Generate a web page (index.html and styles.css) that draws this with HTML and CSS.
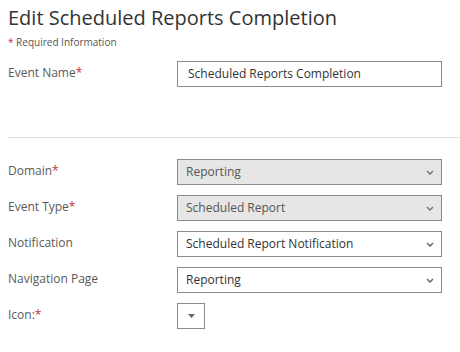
FILE: index.html
```html
<!DOCTYPE html>
<html>
<head>
  <title>Edit Scheduled Reports Completion</title>
  <link rel="stylesheet" href="styles.css">
</head>
<body>
  <h1 class="page-title">Edit Scheduled Reports Completion</h1>
  <p class="required-note"><span class="req">*</span> Required Information</p>

  <!-- Event name -->
  <div class="form-row first">
    <label class="field-label">Event Name<span class="req">*</span></label>
    <div class="text-input">Scheduled Reports Completion</div>
  </div>

  <hr class="divider">

  <!-- Event settings -->
  <div class="form-row">
    <label class="field-label">Domain<span class="req">*</span></label>
    <div class="select disabled">
      <span>Reporting</span>
      <svg class="chevron" width="8" height="5" viewBox="0 0 8 5"><path d="M1 1l3 3 3-3" fill="none" stroke="#777" stroke-width="1.5"/></svg>
    </div>
  </div>
  <div class="form-row">
    <label class="field-label">Event Type<span class="req">*</span></label>
    <div class="select disabled">
      <span>Scheduled Report</span>
      <svg class="chevron" width="8" height="5" viewBox="0 0 8 5"><path d="M1 1l3 3 3-3" fill="none" stroke="#777" stroke-width="1.5"/></svg>
    </div>
  </div>
  <div class="form-row">
    <label class="field-label">Notification</label>
    <div class="select">
      <span>Scheduled Report Notification</span>
      <svg class="chevron" width="8" height="5" viewBox="0 0 8 5"><path d="M1 1l3 3 3-3" fill="none" stroke="#666" stroke-width="1.5"/></svg>
    </div>
  </div>
  <div class="form-row">
    <label class="field-label">Navigation Page</label>
    <div class="select">
      <span>Reporting</span>
      <svg class="chevron" width="8" height="5" viewBox="0 0 8 5"><path d="M1 1l3 3 3-3" fill="none" stroke="#666" stroke-width="1.5"/></svg>
    </div>
  </div>
  <div class="form-row">
    <label class="field-label">Icon:<span class="req">*</span></label>
    <div class="icon-picker">
      <svg width="7" height="4" viewBox="0 0 7 4"><path d="M0 0h7L3.5 4z" fill="#666"/></svg>
    </div>
  </div>
</body>
</html>
```

FILE: styles.css
```css
body {
  margin: 0;
  padding: 0 0 0 8px;
  font-family: 'Open Sans', 'Noto Sans', sans-serif;
  color: #333;
  background: #fff;
  overflow: hidden;
}
.page-title {
  margin: 4px 0 0 0;
  font-size: 20px;
  font-weight: normal;
  line-height: 27px;
  color: #333;
}
.required-note {
  margin: 4px 0 0 0;
  font-size: 10px;
  line-height: 14px;
  color: #555;
}
.req { color: #c9313e; }

/* --- form rows --- */
.form-row {
  display: grid;
  grid-template-columns: 169px 265px;
  align-items: start;
  margin-bottom: 10px;
}
.form-row.first { margin-top: 12px; }
.field-label {
  font-size: 12px;
  line-height: 18px;
  padding-top: 3px;
  color: #5a5a5a;
}
.text-input,
.select {
  box-sizing: border-box;
  height: 26px;
  border: 1px solid #8a8a8a;
  font-size: 12px;
  line-height: 24px;
  color: #333;
  background: #fff;
}
.text-input { padding: 0 10px; }
.select {
  display: flex;
  align-items: center;
  justify-content: space-between;
  padding: 0 7px 0 8px;
}
.select.disabled {
  background: #e6e6e6;
  color: #555;
}
.chevron { flex: none; }
.icon-picker {
  box-sizing: border-box;
  width: 28px;
  height: 26px;
  border: 1px solid #8a8a8a;
  display: flex;
  align-items: center;
  justify-content: center;
}

.divider {
  margin: 50px 0 21px 0;
  border: none;
  border-top: 1px solid #e2e2e2;
}
```
